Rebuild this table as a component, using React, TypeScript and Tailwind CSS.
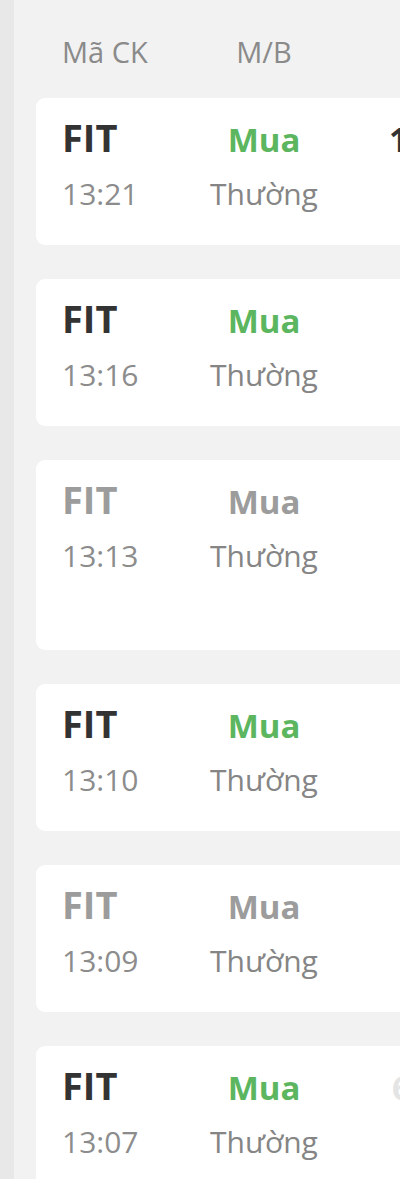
import React from "react";

type Row = { time: string; active: boolean; tall?: boolean; third?: string; thirdClass?: string };

const rows: Row[] = [
  { time: "13:21", active: true, third: "1.000", thirdClass: "ml-[70px] text-[#333333] font-bold" },
  { time: "13:16", active: true },
  { time: "13:13", active: false, tall: true },
  { time: "13:10", active: true },
  { time: "13:09", active: false },
  { time: "13:07", active: true, third: "6", thirdClass: "ml-[73px] text-[#e4e4e4] font-bold" },
];

export default function App() {
  return (
    <div
      className="w-[400px] h-[1179px] overflow-hidden flex bg-[#f2f2f2]"
      style={{ fontFamily: '"Open Sans", "Noto Sans", sans-serif' }}
    >
      <div className="w-[14px] shrink-0 bg-[#e8e8e8]" />
      <div className="flex-1 min-w-0 pl-[22px]">
        <div className="flex pt-[37px] h-[98px] pl-[26px] text-[29px] leading-none text-[#8a8a8a]">
          <div className="w-[147px] shrink-0">Mã CK</div>
          <div className="w-[110px] shrink-0 text-center">M/B</div>
        </div>
        <div className="flex flex-col gap-[34px] w-[420px]">
          {rows.map((r, i) => (
            <div
              key={i}
              className={`bg-white rounded-[9px] pl-[26px] pt-[20px] ${r.tall ? "h-[190px]" : "h-[147px]"}`}
            >
              <div className="flex items-baseline h-[38px]">
                <div
                  className={`w-[147px] shrink-0 text-[38px] leading-none font-bold ${r.active ? "text-[#333333]" : "text-[#9c9c9c]"}`}
                >
                  FIT
                </div>
                <div
                  className={`w-[110px] shrink-0 text-center text-[33px] leading-none font-bold ${r.active ? "text-[#5cb660]" : "text-[#9c9c9c]"}`}
                >
                  Mua
                </div>
                {r.third && (
                  <div className={`shrink-0 text-[34px] leading-none whitespace-nowrap ${r.thirdClass}`}>
                    {r.third}
                  </div>
                )}
              </div>
              <div className="flex mt-[23px] h-[30px] text-[30px] leading-none">
                <div className="w-[147px] shrink-0 text-[#8c8c8c]">{r.time}</div>
                <div className="w-[110px] shrink-0 text-center text-[#858585]">Thường</div>
              </div>
            </div>
          ))}
        </div>
      </div>
    </div>
  );
}
